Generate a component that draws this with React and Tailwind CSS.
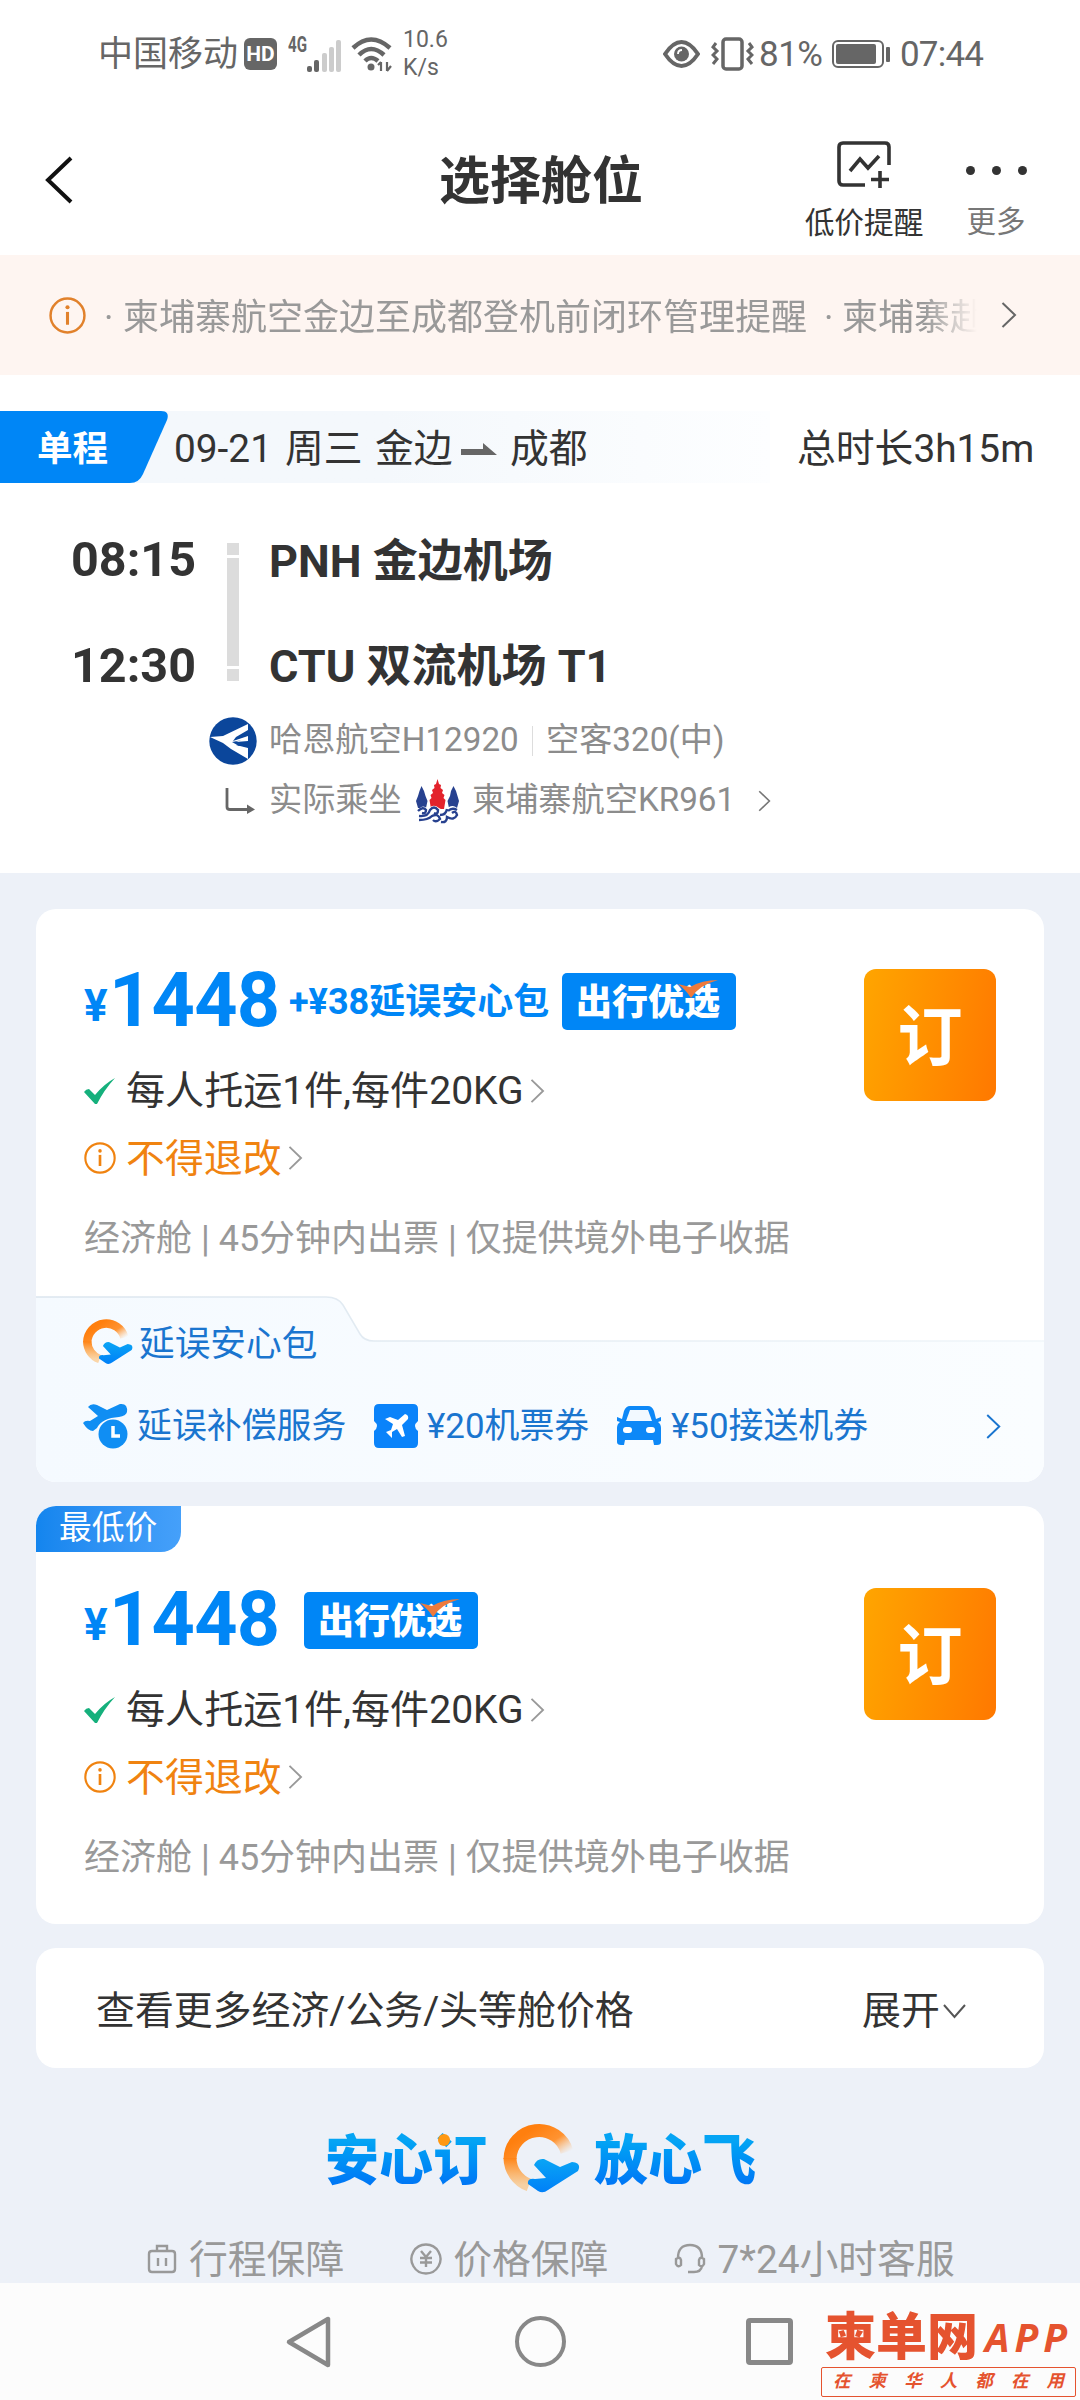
import React from 'react'

const services = ['行程保障', '价格保障', '7*24小时客服']

const Chevron = ({ className }) => (
    <svg className={className} viewBox="0 0 16 26" fill="none" stroke="currentColor" strokeWidth="2">
        <path d="M1.5 1 L14 13 L1.5 25" />
    </svg>
)

const InfoIcon = ({ className }) => (
    <svg className={className} viewBox="0 0 36 36" fill="none" stroke="currentColor" strokeWidth="2.4">
        <circle cx="18" cy="18" r="16.5" />
        <path d="M18 14.5 V27" strokeWidth="3" />
        <circle cx="18" cy="10" r="2" fill="currentColor" stroke="none" />
    </svg>
)

const StatusBar = () => (
    <div className="flex h-[107px] items-center text-[#666]">
        <span className="ml-[98px] mt-[3px] w-[146px] text-[35px] leading-[44px]">中国移动</span>
        <span className="flex h-[32px] w-[33px] items-center justify-center rounded-[6px] bg-[#666] text-[21px] font-bold leading-[28px] text-white">HD</span>
        <svg className="ml-[11px] h-[40px] w-[54px]" viewBox="0 0 54 40" fill="#666">
            <text x="0" y="18" fontSize="22" fontWeight="700" textLength="19" lengthAdjust="spacingAndGlyphs">4G</text>
            <rect x="19" y="32" width="5" height="6" rx="2" />
            <rect x="26" y="26" width="5" height="12" rx="2" />
            <g fill="#ccc">
                <rect x="34" y="19" width="5" height="19" rx="2" />
                <rect x="41" y="13" width="5" height="25" rx="2" />
                <rect x="48" y="6" width="5" height="32" rx="2" />
            </g>
        </svg>
        <svg className="ml-[9px] h-[36px] w-[42px]" viewBox="0 0 42 36" fill="none" stroke="#666" strokeWidth="4.5">
            <path d="M2 12 Q20 -5 39 12" />
            <path d="M8 19 Q20 7 33 19" />
            <path d="M14 25 Q20 19 27 25" />
            <circle cx="20" cy="31" r="3.5" fill="#666" stroke="none" />
            <path d="M30 26 V35 M27 29 L30 26 M36 26 V35 M36 35 L40 30" strokeWidth="2.2" />
        </svg>
        <span className="ml-[10px] w-[50px] text-[23px] leading-[28px]">10.6<br />K/s</span>
        <svg className="ml-[210px] h-[28px] w-[37px]" viewBox="0 0 37 28" fill="none" stroke="#666" strokeWidth="4">
            <path d="M2 14 Q10 2 18.500 2 Q27 2 35 14 Q27 26 18.500 26 Q10 26 2 14 Z" />
            <circle cx="18.500" cy="14" r="7.500" fill="#666" stroke="none" />
            <path d="M15 14 Q15 10 19 10" stroke="#fff" strokeWidth="1.800" />
        </svg>
        <svg className="ml-[11px] h-[36px] w-[43px]" viewBox="0 0 43 36" fill="none" stroke="#666" strokeWidth="3.500">
            <rect x="12" y="3" width="19" height="30" rx="3" />
            <path d="M5 7 L2 11 L6 15 L2 19 L6 23 L2 28 M38 7 L41 11 L37 15 L41 19 L37 23 L41 28" strokeWidth="3" />
        </svg>
        <span className="ml-[5px] mt-[1px] w-[71px] text-[35px] tracking-[-0.5px]">81%</span>
        <svg className="ml-[2px] h-[28px] w-[58px]" viewBox="0 0 58 28" fill="#666">
            <rect x="1" y="1" width="50" height="26" rx="5" fill="none" stroke="#666" strokeWidth="2" />
            <rect x="4" y="4" width="40" height="20" rx="2" />
            <rect x="54" y="7" width="4" height="15" rx="1" />
        </svg>
        <span className="ml-[10px] mt-[1px] text-[35px] tracking-[-0.8px]">07:44</span>
    </div>
)

const Header = () => (
    <header className="flex h-[148px] items-start text-[#333]">
        <svg className="ml-[44px] mt-[48px] h-[50px] w-[30px]" viewBox="0 0 30 50" fill="none" stroke="#111" strokeWidth="4">
            <path d="M27 3 L4 25 L27 47" />
        </svg>
        <h1 className="ml-[365px] mt-[49px] w-[366px] text-[51px] font-bold">选择舱位</h1>
        <div className="flex w-[118px] flex-col items-center">
            <svg className="mt-[34px] h-[48px] w-[56px]" viewBox="0 0 56 48" fill="none" stroke="#333" strokeWidth="3.600">
                <path d="M29 44 H7 Q3 44 3 40 V6 Q3 2 7 2 H49 Q53 2 53 6 V24" />
                <path d="M14 30 L24 18 L32 27 L43 15" />
                <path d="M44 30 V47 M35 38.500 H53" />
            </svg>
            <span className="mt-[19px] text-[29.7px]">低价提醒</span>
        </div>
        <div className="ml-[43px] flex w-[60px] flex-col items-center">
            <div className="mt-[59px] flex gap-[17px]">
                <i className="size-[9px] rounded-full bg-[#333]" />
                <i className="size-[9px] rounded-full bg-[#333]" />
                <i className="size-[9px] rounded-full bg-[#333]" />
            </div>
            <span className="mt-[33px] text-[29.5px] text-[#777]">更多</span>
        </div>
    </header>
)

const Notice = () => (
    <div className="flex h-[120px] items-center bg-[#fef5f1]">
        <InfoIcon className="ml-[49px] size-[37px] text-[#e1812b]" />
        <div className="ml-[18px] mt-[6px] flex w-[873px] overflow-hidden text-[36px] leading-[54px] text-[#999] [mask-image:linear-gradient(to_right,black_94%,transparent)]">
            <span className="w-[19px] shrink-0">·</span>
            <span className="w-[701px] shrink-0">柬埔寨航空金边至成都登机前闭环管理提醒</span>
            <span className="w-[18px] shrink-0">·</span>
            <span className="shrink-0">柬埔寨赴</span>
        </div>
        <Chevron className="ml-[23px] h-[26px] w-[18px] text-[#666]" />
    </div>
)

const RouteBar = () => (
    <div className="mt-[36px] flex h-[72px] items-center text-[38.8px] text-[#333]">
        <div className="relative flex h-full w-[770px] items-center bg-linear-to-r from-[#f4f8fc] from-50% to-[#fdfeff] pt-[5px]">
            <svg className="absolute left-0 top-0 h-[72px] w-[170px]" viewBox="0 0 170 72">
                <path d="M0 0 H161 Q170 0 167 9 L143 63 Q139 72 130 72 H0 Z" fill="#0086f6" />
            </svg>
            <span className="relative ml-[37px] w-[137px] text-[35.5px] font-bold text-white">单程</span>
            <span className="w-[111px]">09-21</span>
            <span className="w-[90px]">周三</span>
            <span className="w-[86px]">金边</span>
            <svg className="h-[14px] w-[36px]" viewBox="0 0 36 14" fill="#666">
                <path d="M0 6 H22 V0 L36 12 H0 Z" />
            </svg>
            <span className="ml-[13px]">成都</span>
        </div>
        <span className="ml-[27px] pt-[5px]">总时长3h15m</span>
    </div>
)

const HahnLogo = () => (
    <svg className="size-[48px]" viewBox="0 0 48 48">
        <circle cx="24" cy="24" r="23.700" fill="#0b469b" />
        <path d="M1 20 L14 19 L39 7 V13 L27 20 L24 24 L39 19 V25 L27 28 L39 31 V42 L22 32 L14 26 Z" fill="#fff" />
        <path d="M23 25 L39 22 V28 L30 29 Z" fill="#0b469b" />
        <path d="M27 25 L39 20 V24 Z" fill="#fff" />
    </svg>
)

const CambodiaLogo = () => (
    <svg className="h-[45px] w-[43px]" viewBox="0 0 43 45" fill="none">
        <path d="M21.500 0 L23 5 L25 6 L24.500 9 L27 11 L26 14 L28.500 16 L27.500 19 L29.500 21 L28 30 H15 L13.500 21 L15.500 19 L14.500 16 L17 14 L16 11 L18.500 9 L18 6 L20 5 Z" fill="#e3222b" />
        <path d="M5.500 7 L8 12 L9.500 17 L11.500 22 L10 29 H2 L0 22 L2 17 L3.500 12 Z M37.500 7 L40 12 L41.500 17 L43 22 L41 29 H33 L31.500 22 L34 17 L35 12 Z" fill="#27418f" />
        <path d="M1 32 Q7 24 12 30 Q17 24 23 29 Q28 33 33 28 Q38 25 43 31 V45 H0 Z" fill="#fff" />
        <path d="M2 32 Q7 27 10 31 Q10 35 6 34 M3 37 Q12 38 14 31 Q18 26 22 31 Q22 36 18 34 M24 36 Q30 36 31 30 M3 41 Q12 41 16 37 Q22 34 24 40 Q20 44 17 41 M25 43 Q31 44 31 38 Q38 42 41 36 Q40 31 36 34 M32 32 Q36 28 41 31" stroke="#27418f" strokeWidth="2.400" />
    </svg>
)

const FlightInfo = () => (
    <section className="flex h-[390px] flex-col text-[#333]">
        <div className="flex h-[234px] pl-[71px] pt-[38px] text-[45px] font-bold">
            <div className="flex w-[156px] flex-col gap-[57px] pt-[15px] text-[48.5px]">
                <span>08:15</span>
                <span>12:30</span>
            </div>
            <div className="flex w-[12px] flex-col gap-[3px] pt-[22px] *:bg-[#dcdcdc]">
                <i className="h-[12px] w-full" />
                <i className="h-[108px] w-full" />
                <i className="h-[12px] w-full" />
            </div>
            <div className="ml-[30px] flex flex-col gap-[60px] pt-[18px]">
                <span>PNH 金边机场</span>
                <span>CTU 双流机场 T1</span>
            </div>
        </div>
        <div className="flex h-[48px] items-center pl-[209px] text-[33.2px] text-[#8c8c8c]">
            <HahnLogo />
            <span className="ml-[12px] w-[263px] pb-[2px]">哈恩航空H12920</span>
            <i className="h-[30px] w-px bg-[#ddd]" />
            <span className="ml-[13px] pb-[2px]">空客320(中)</span>
        </div>
        <div className="mt-[12px] flex h-[48px] items-center pl-[224px] text-[33.2px] text-[#8c8c8c]">
            <svg className="h-[28px] w-[32px]" viewBox="0 0 32 28" fill="none" stroke="#666" strokeWidth="2.800">
                <path d="M3 1 V20 Q3 22.500 6 22.500 H25" />
                <path d="M23 17.500 L31 22.500 L23 27 Z" fill="#666" stroke="none" />
            </svg>
            <span className="ml-[13px] w-[147px] pb-[2px]">实际乘坐</span>
            <CambodiaLogo />
            <span className="ml-[13px] w-[286px] pb-[2px]">柬埔寨航空KR961</span>
            <Chevron className="h-[22px] w-[13px] text-[#777]" />
        </div>
    </section>
)

const Badge = () => (
    <div className="relative flex h-[57px] w-[174px] items-center justify-center rounded-[5px] bg-[#0086f6] pr-[2px] pt-[3px] text-[36px] font-black text-white">
        出行优选
        <svg className="absolute left-[115px] top-[6px] h-[20px] w-[42px]" viewBox="0 0 42 20">
            <path d="M1 5 L13 8 Q25 1 41 1 Q22 6 14 19 Q9 11 1 5 Z" fill="#ee7a3c" />
        </svg>
    </div>
)

const Fare = ({ extra }) => (
    <div className="flex pl-[48px]">
        <div className="flex w-[781px] flex-col">
            <div className="flex h-[64px] items-center font-bold text-[#0086f6]">
                <span className="mt-[10px] w-[25px] text-[44px]">¥</span>
                <span className="w-[180px] text-[75.5px] tracking-[-0.7px]">1448</span>
                {extra && <span className="w-[273px] pt-[2px] text-[36px]">{extra}</span>}
                <div className={extra ? '' : 'ml-[15px]'}><Badge /></div>
            </div>
            <div className="mt-[36px] flex h-[44px] items-center text-[39.1px] text-[#333]">
                <svg className="h-[26px] w-[31px]" viewBox="0 0 31 26" fill="#15b07c">
                    <path d="M0 14 Q2 11 5 11 L11 17 Q20 6 31 0 Q20 12 13 26 H11 Z" />
                </svg>
                <span className="ml-[11px] w-[404px] pt-[1px]">每人托运1件,每件20KG</span>
                <Chevron className="h-[24px] w-[15px] text-[#999]" />
            </div>
            <div className="mt-[23px] flex h-[44px] items-center text-[38.9px] text-[#f08310]">
                <InfoIcon className="size-[32px]" />
                <span className="ml-[10px] w-[162px] pt-[2px]">不得退改</span>
                <Chevron className="h-[24px] w-[15px] text-[#999]" />
            </div>
            <p className="mt-[41px] text-[36px] text-[#999]">经济舱 | 45分钟内出票 | 仅提供境外电子收据</p>
        </div>
        <button className="-ml-px size-[132px] rounded-[12px] bg-linear-100 from-[#ffa500] to-[#ff7800] pt-[7px] text-[65px] font-bold text-white">订</button>
    </div>
)

// Orange ring with the blue plane across it
const RingLogo = ({ className }) => (
    <svg className={className} viewBox="0 0 78 72" fill="none">
        <defs>
            <linearGradient id="ring" x1="0.2" y1="0.2" x2="1" y2="0.8">
                <stop offset="0" stopColor="#ff7f0e" />
                <stop offset="0.55" stopColor="#ff9331" />
                <stop offset="1" stopColor="#ffb870" stopOpacity="0" />
            </linearGradient>
            <linearGradient id="ringEnd" x1="0" y1="0" x2="0" y2="1">
                <stop offset="0" stopColor="#ff8416" />
                <stop offset="1" stopColor="#ffb050" stopOpacity="0.5" />
            </linearGradient>
            <linearGradient id="plane" x1="0" y1="0" x2="0" y2="1">
                <stop offset="0" stopColor="#0aa5f5" />
                <stop offset="1" stopColor="#0080f8" />
            </linearGradient>
        </defs>
        <path d="M8 37 A29 29 0 0 1 65 30" stroke="url(#ring)" strokeWidth="13" />
        <path d="M8 36 A29 29 0 0 0 27 63" stroke="url(#ringEnd)" strokeWidth="13" />
        <path d="M32 43 Q35 36 42 37 L58 45 L70 40 Q80 41 76 49 L46 68 Q41 72 36 69 L26 62 Q25 56 33 57 L44 56 Z" fill="url(#plane)" />
    </svg>
)

const DelayIcon = () => (
    <svg className="size-[46px]" viewBox="0 0 46 46" fill="#108ef3">
        <path d="M6 4 Q9 0 15 2 L25 7 L38 1 Q46 0 45 9 Q44 13 37 14 Q20 15 15 25 L11 28 Q6 28 1 20 Q3 17 8 18 L16 13 Z" />
        <circle cx="31" cy="31" r="14.500" />
        <path d="M31 23 V33 H38" fill="none" stroke="#fff" strokeWidth="3.500" />
    </svg>
)

const TicketIcon = () => (
    <svg className="size-[44px]" viewBox="0 0 44 44">
        <path d="M5 0 H39 Q44 0 44 5 V17 Q38 22 44 27 V39 Q44 44 39 44 H5 Q0 44 0 39 V27 Q6 22 0 17 V5 Q0 0 5 0 Z" fill="#0a83fa" />
        <path d="M11 15 L16 13 L24 16 L31 10 Q35 11 34 15 L28 21 L31 32 L28 33 L23 25 L18 28 V34 L12 28 L17 26 L19 20 Z" fill="#fff" />
    </svg>
)

const CarIcon = () => (
    <svg className="h-[40px] w-[46px]" viewBox="0 0 46 40">
        <path d="M14 0 H32 Q36 0 38 5 L40 13 L45 11 V15 L42 16 Q45 18 45 22 V36 Q45 39 41 39 H38 L37 34 H9 L8 39 H5 Q1 39 1 36 V22 Q1 18 4 16 L1 15 V11 L6 13 L8 5 Q10 0 14 0 Z" fill="#0d88f7" />
        <path d="M14 4 H32 L36 15 H10 Z" fill="#f2f9ff" />
        <rect x="7" y="21" width="9" height="6" rx="3" fill="#fff" />
        <rect x="30" y="21" width="9" height="6" rx="3" fill="#fff" />
    </svg>
)

const DelayPack = () => (
    <div className="relative h-[186px] text-[35.7px] text-[#1a75cf]">
        <svg className="absolute inset-0 h-[187px] w-[1008px]" viewBox="0 0 1008 187">
            <defs>
                <linearGradient id="edge" x1="0" y1="0" x2="1" y2="0">
                    <stop offset="0" stopColor="#dbe5ee" />
                    <stop offset="1" stopColor="#f0f6fa" />
                </linearGradient>
                <linearGradient id="pack" x1="0" y1="0" x2="1" y2="0">
                    <stop offset="0" stopColor="#f5faff" />
                    <stop offset="1" stopColor="#fafdff" />
                </linearGradient>
            </defs>
            <path d="M0 1 H290 Q302 1 307 9 L324 38 Q328 45 338 45 H1008 V187 H0 Z" fill="url(#pack)" />
            <path d="M0 1 H290 Q302 1 307 9 L324 38 Q328 45 338 45 H1008" fill="none" stroke="url(#edge)" strokeWidth="1.500" />
        </svg>
        <div className="relative flex h-full flex-col pl-[46px]">
            <div className="mt-[20px] flex h-[50px] items-center">
                <RingLogo className="h-[47px] w-[51px]" />
                <span className="ml-[6px] pt-[7px]">延误安心包</span>
            </div>
            <div className="mt-[37px] flex h-[46px] items-center text-[34.900px]">
                <DelayIcon />
                <span className="ml-[9px] w-[237px] pt-[3px]">延误补偿服务</span>
                <TicketIcon />
                <span className="ml-[9px] w-[189px] pt-[3px]">¥20机票券</span>
                <CarIcon />
                <span className="ml-[9px] w-[314px] pt-[3px]">¥50接送机券</span>
                <Chevron className="h-[25px] w-[17px]" />
            </div>
        </div>
    </div>
)

const ServiceIcon = ({ index }) => (
    <svg className="size-[32px]" viewBox="0 0 32 32" fill="none" stroke="#999" strokeWidth="2.400">
        {index === 0 && <path d="M6 8 H26 Q29 8 29 11 V26 Q29 29 26 29 H6 Q3 29 3 26 V11 Q3 8 6 8 Z M11 8 V3 H21 V8 M12 15 V23 M20 15 V23" />}
        {index === 1 && <path d="M16 1.500 A14.500 14.500 0 1 1 15.900 1.500 Z M11 8 L16 14 L21 8 M16 14 V24 M10 15 H22 M10 19.500 H22" />}
        {index === 2 && <path d="M4 15 Q4 2 16 2 Q28 2 28 15 M2 16 Q6 13 7 17 V22 Q4 25 2 21 Z M30 16 Q26 13 25 17 V22 Q28 25 30 21 Z M28 23 Q27 29 20 29 H14" />}
    </svg>
)

const Slogan = () => (
    <div className="mt-[52px] flex h-[76px] items-center pl-[325px] text-[54px] font-black leading-[70px]">
        <span className="relative mt-[7px] w-[177px] bg-linear-to-b from-[#05a4f4] from-20% to-[#0074f5] to-85% bg-clip-text text-transparent">
            安心订
            <i className="absolute left-[113px] top-[7px] size-[12px] rounded-full bg-[#ff9812]" />
        </span>
        <RingLogo className="h-[72px] w-[78px]" />
        <span className="ml-[14px] mt-[7px] bg-linear-to-b from-[#05a4f4] from-20% to-[#0074f5] to-85% bg-clip-text text-transparent">放心飞</span>
    </div>
)

const Watermark = () => (
    <div className="absolute left-[821px] top-[29px] w-[255px] text-[#e5532f]">
        <div className="flex items-end pl-[4px]">
            <span className="text-[51px] font-black">柬单网</span>
            <span className="mb-[7px] ml-[7px] font-['Open_Sans',sans-serif] text-[39px] font-bold italic tracking-[5px]">APP</span>
        </div>
        <div className="mt-[4px] flex h-[30px] items-center justify-between rounded-[2px] border border-[#e5532f] px-[11px] text-[17.5px] font-bold italic">
            {[...'在柬华人都在用'].map((c, i) => <span key={i}>{c}</span>)}
        </div>
    </div>
)

const NavBar = () => (
    <nav className="relative flex h-[117px] items-start bg-[#fcfcfc]">
        <svg className="ml-[284px] mt-[32px] h-[54px] w-[50px]" viewBox="0 0 50 54" fill="none" stroke="#888" strokeWidth="4.500" strokeLinejoin="round">
            <path d="M44 4 V50 L5 27 Z" />
        </svg>
        <i className="ml-[181px] mt-[33px] size-[51px] rounded-full border-[4.5px] border-[#888]" />
        <i className="ml-[180px] mt-[35px] size-[47px] rounded-[4px] border-[5px] border-[#888]" />
        <Watermark />
    </nav>
)

function App() {
    return (
        <div className="h-[2400px] w-[1080px] overflow-hidden whitespace-nowrap bg-white font-[Roboto,'Noto_Sans_CJK_SC',sans-serif] leading-none">
            <StatusBar />
            <Header />
            <Notice />
            <RouteBar />
            <FlightInfo />
            <main className="flex h-[1410px] flex-col bg-[#edf1f8] px-[36px] pt-[36px]">
                <section className="flex h-[573px] shrink-0 flex-col justify-between overflow-hidden rounded-[20px] bg-white pt-[60px]">
                    <Fare extra="+¥38延误安心包" />
                    <DelayPack />
                </section>
                <section className="relative mt-[24px] h-[418px] shrink-0 overflow-hidden rounded-[20px] bg-white pt-[82px]">
                    <span className="absolute left-0 top-0 flex h-[46px] w-[145px] items-center rounded-br-[20px] bg-linear-to-r from-[#1385ee] to-[#45a0fa] pb-[2px] pl-[23px] text-[32.8px] text-white">最低价</span>
                    <Fare />
                </section>
                <section className="mt-[24px] flex h-[120px] shrink-0 items-center rounded-[20px] bg-white pt-[7px] text-[38.9px] text-[#333]">
                    <span className="ml-[60px] w-[766px]">查看更多经济/公务/头等舱价格</span>
                    <span className="w-[81px]">展开</span>
                    <svg className="h-[15px] w-[23px]" viewBox="0 0 23 15" fill="none" stroke="#555" strokeWidth="2">
                        <path d="M1 1 L11.500 13 L22 1" />
                    </svg>
                </section>
                <div className="-mx-[36px]">
                    <Slogan />
                    <div className="mt-[41px] flex h-[44px] items-center gap-[66px] pl-[146px] text-[38.800px] text-[#999]">
                        {services.map((name, i) => (
                            <div key={name} className="flex items-center gap-[11px]">
                                <ServiceIcon index={i} />
                                <span className="pt-[3px]">{name}</span>
                            </div>
                        ))}
                    </div>
                </div>
            </main>
            <NavBar />
        </div>
    )
}

export default App
